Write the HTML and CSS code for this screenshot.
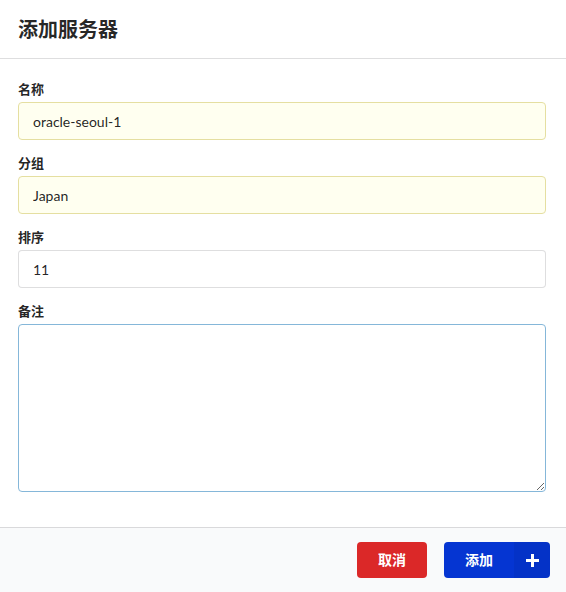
FILE: index.html
```html
<!DOCTYPE html>
<html lang="zh">
<head>
<meta charset="utf-8">
<title>添加服务器</title>
<link rel="stylesheet" href="styles.css">
</head>
<body>
<div class="modal">
  <div class="header">添加服务器</div>
  <div class="content">
    <form class="form">
      <div class="field">
        <label class="label">名称</label>
        <input class="input autofill" type="text" value="oracle-seoul-1">
      </div>
      <div class="field">
        <label class="label">分组</label>
        <input class="input autofill" type="text" value="Japan">
      </div>
      <div class="field">
        <label class="label">排序</label>
        <input class="input" type="text" value="11">
      </div>
      <div class="field">
        <label class="label">备注</label>
        <textarea class="textarea focus"></textarea>
      </div>
    </form>
  </div>
  <div class="actions">
    <button class="btn red" type="button">取消</button>
    <button class="btn blue labeled" type="button">添加<span class="icon"><svg width="13" height="13" viewBox="0 0 13 13"><rect x="5" y="0" width="3" height="13" fill="#fff"/><rect x="0" y="5" width="13" height="3" fill="#fff"/></svg></span></button>
  </div>
</div>
</body>
</html>
```
FILE: styles.css
```css
* { box-sizing: border-box; }
html, body { margin: 0; padding: 0; background: #fff; }
body {
  font-family: Lato, "Noto Sans CJK SC", "Noto Sans", sans-serif;
  font-size: 14px;
  color: rgba(0,0,0,0.87);
}
.modal { width: 566px; height: 592px; display: flex; flex-direction: column; overflow: hidden; }
.header {
  padding: 16px 18px 16px 18px;
  height: 59px;
  font-size: 20px;
  font-weight: 700;
  line-height: 26px;
  color: rgba(0,0,0,0.85);
  border-bottom: 1px solid rgba(34,36,38,0.15);
}
.content { padding: 21px 20px 35px 18px; }
.form { margin: 0; }
.field { margin-bottom: 14px; }
.field:last-child { margin-bottom: 0; }
.label {
  display: block;
  font-size: 13px;
  font-weight: 700;
  line-height: 18px;
  margin-bottom: 4px;
  color: rgba(0,0,0,0.87);
}
.input, .textarea {
  display: block;
  width: 528px;
  font-family: Lato, "Noto Sans CJK SC", "Noto Sans", sans-serif;
  font-size: 14px;
  color: rgba(0,0,0,0.87);
  background: #fff;
  border: 1px solid rgba(34,36,38,0.15);
  border-radius: 4px;
  outline: none;
}
.input { height: 38px; padding: 9.5px 14px; line-height: 17px; }
.input.autofill { background: #fffff0; border-color: #e5dfa1; }
.textarea { height: 168px; padding: 10px 14px; resize: vertical; margin: 0; }
.textarea.focus { border-color: #85b7d9; }
.actions {
  flex: 1;
  background: #f9fafb;
  border-top: 1px solid rgba(34,36,38,0.15);
  padding: 14px 16px 14px 16px;
  display: flex;
  justify-content: flex-end;
  align-items: flex-start;
  gap: 17px;
}
.btn {
  height: 36px;
  border: none;
  border-radius: 4px;
  font-family: Lato, "Noto Sans CJK SC", "Noto Sans", sans-serif;
  font-size: 14px;
  font-weight: 700;
  line-height: 14px;
  color: #fff;
  padding: 11px 21px;
  cursor: pointer;
  position: relative;
}
.btn.red { background: #db2828; width: 70px; }
.btn.blue { background: #0535d2; }
.btn.labeled { padding-right: 57px; width: 106px; text-align: left; }
.icon {
  position: absolute;
  top: 0; right: 0; bottom: 0;
  width: 36px;
  background: rgba(0,0,0,0.05);
  border-radius: 0 4px 4px 0;
  display: flex;
  align-items: center;
  justify-content: center;
}
.icon svg { display: block; }
```
